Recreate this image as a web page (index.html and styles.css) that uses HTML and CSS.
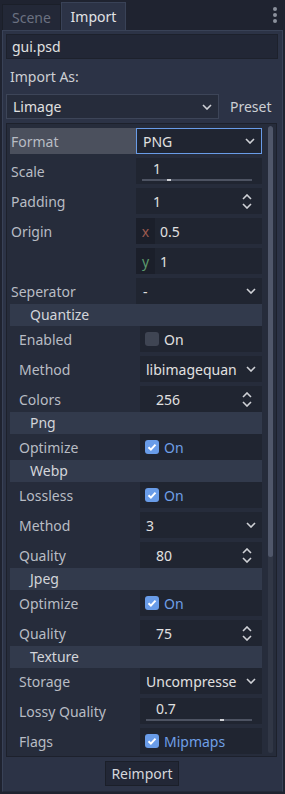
FILE: index.html
```html
<!DOCTYPE html>
<html>
<head>
<meta charset="utf-8">
<link rel="stylesheet" href="styles.css">
</head>
<body>
<div class="tabs">
  <div class="tab tab-off">Scene</div>
  <div class="tab tab-on">Import</div>
  <div class="menu"><span></span><span></span><span></span></div>
</div>
<div class="panel">
  <div class="file">gui.psd</div>
  <div class="label-line">Import As:</div>
  <div class="import-row">
    <div class="opt-big">Limage<svg class="chev" width="10" height="6" viewBox="0 0 10 6"><path d="M1 1l4 4 4-4" fill="none" stroke="#cfd1d6" stroke-width="1.6"/></svg></div>
    <div class="preset">Preset</div>
  </div>
  <div class="inspector">
    <div class="props">
      <div class="row top"><div class="lbl hl">Format</div><div class="ed opt focus">PNG<svg class="chev" width="10" height="6" viewBox="0 0 10 6"><path d="M1 1l4 4 4-4" fill="none" stroke="#cfd1d6" stroke-width="1.6"/></svg></div></div>
      <div class="row top"><div class="lbl">Scale</div><div class="ed range"><span class="rv">1</span><div class="track"><i style="left:25px"></i></div></div></div>
      <div class="row top"><div class="lbl">Padding</div><div class="ed spin">1<svg class="arr" width="10" height="15" viewBox="0 0 10 15"><path d="M1 5l4-4 4 4M1 10l4 4 4-4" fill="none" stroke="#cfd1d6" stroke-width="1.6"/></svg></div></div>
      <div class="row top"><div class="lbl">Origin</div><div class="ed vec"><span class="axis ax-x">x</span><span class="vv">0.5</span></div></div>
      <div class="row top"><div class="lbl"></div><div class="ed vec"><span class="axis ax-y">y</span><span class="vv">1</span></div></div>
      <div class="row top"><div class="lbl">Seperator</div><div class="ed opt">-<svg class="chev" width="10" height="6" viewBox="0 0 10 6"><path d="M1 1l4 4 4-4" fill="none" stroke="#cfd1d6" stroke-width="1.6"/></svg></div></div>
      <div class="sec">Quantize</div>
      <div class="row sub"><div class="lbl">Enabled</div><div class="ed chk"><span class="box"></span>On</div></div>
      <div class="row sub"><div class="lbl">Method</div><div class="ed opt"><span>libimagequan</span><svg class="chev" width="10" height="6" viewBox="0 0 10 6"><path d="M1 1l4 4 4-4" fill="none" stroke="#cfd1d6" stroke-width="1.6"/></svg></div></div>
      <div class="row sub"><div class="lbl">Colors</div><div class="ed spin">256<svg class="arr" width="10" height="15" viewBox="0 0 10 15"><path d="M1 5l4-4 4 4M1 10l4 4 4-4" fill="none" stroke="#cfd1d6" stroke-width="1.6"/></svg></div></div>
      <div class="sec">Png</div>
      <div class="row sub"><div class="lbl">Optimize</div><div class="ed chk on"><span class="box"><svg width="14" height="14" viewBox="0 0 14 14"><path d="M3.5 7.2l2.4 2.4 4.6-5" fill="none" stroke="#fff" stroke-width="2"/></svg></span>On</div></div>
      <div class="sec">Webp</div>
      <div class="row sub"><div class="lbl">Lossless</div><div class="ed chk on"><span class="box"><svg width="14" height="14" viewBox="0 0 14 14"><path d="M3.5 7.2l2.4 2.4 4.6-5" fill="none" stroke="#fff" stroke-width="2"/></svg></span>On</div></div>
      <div class="row sub"><div class="lbl">Method</div><div class="ed opt">3<svg class="chev" width="10" height="6" viewBox="0 0 10 6"><path d="M1 1l4 4 4-4" fill="none" stroke="#cfd1d6" stroke-width="1.6"/></svg></div></div>
      <div class="row sub"><div class="lbl">Quality</div><div class="ed spin">80<svg class="arr" width="10" height="15" viewBox="0 0 10 15"><path d="M1 5l4-4 4 4M1 10l4 4 4-4" fill="none" stroke="#cfd1d6" stroke-width="1.6"/></svg></div></div>
      <div class="sec">Jpeg</div>
      <div class="row sub"><div class="lbl">Optimize</div><div class="ed chk on"><span class="box"><svg width="14" height="14" viewBox="0 0 14 14"><path d="M3.5 7.2l2.4 2.4 4.6-5" fill="none" stroke="#fff" stroke-width="2"/></svg></span>On</div></div>
      <div class="row sub"><div class="lbl">Quality</div><div class="ed spin">75<svg class="arr" width="10" height="15" viewBox="0 0 10 15"><path d="M1 5l4-4 4 4M1 10l4 4 4-4" fill="none" stroke="#cfd1d6" stroke-width="1.6"/></svg></div></div>
      <div class="sec">Texture</div>
      <div class="row sub"><div class="lbl">Storage</div><div class="ed opt"><span>Uncompresse</span><svg class="chev" width="10" height="6" viewBox="0 0 10 6"><path d="M1 1l4 4 4-4" fill="none" stroke="#cfd1d6" stroke-width="1.6"/></svg></div></div>
      <div class="row sub"><div class="lbl">Lossy Quality</div><div class="ed range"><span class="rv">0.7</span><div class="track"><i style="left:74px"></i></div></div></div>
      <div class="row sub"><div class="lbl">Flags</div><div class="ed chk on"><span class="box"><svg width="14" height="14" viewBox="0 0 14 14"><path d="M3.5 7.2l2.4 2.4 4.6-5" fill="none" stroke="#fff" stroke-width="2"/></svg></span>Mipmaps</div></div>
    </div>
    <div class="scroll"><div class="sbar"><div class="grab"></div></div></div>
  </div>
  <div class="btn-line"><div class="btn">Reimport</div></div>
</div>
</body>
</html>
```
FILE: styles.css
```css
* { box-sizing: border-box; }
html, body { margin: 0; padding: 0; }
body {
  background: #1f2330;
  font-family: "Noto Sans", "DejaVu Sans", sans-serif;
  font-size: 14px;
  color: #e0e0e0;
  width: 285px;
  height: 794px;
  overflow: hidden;
}
.tabs {
  height: 30px;
  display: flex;
  align-items: flex-end;
  padding-left: 2px;
}
.tab {
  display: flex;
  align-items: center;
  justify-content: center;
}
.tab-off {
  width: 59px;
  height: 26px;
  background: #232837;
  color: #6b7181;
  border: 1px solid #1b1f29;
  border-bottom: none;
}
.tab-on {
  width: 65px;
  height: 28px;
  background: #2c3346;
  border: 1px solid #394257;
  border-bottom: none;
  color: #e2e3e6;
}
.menu {
  margin-left: auto;
  align-self: flex-start;
  padding: 7px 8px 0 0;
  display: flex;
  flex-direction: column;
  gap: 2px;
}
.menu span {
  width: 4px;
  height: 4px;
  border-radius: 2px;
  background: #8c919c;
}
.panel {
  margin: 0 2px;
  height: 762px;
  background: #2c3346;
  border: 1px solid #394257;
  border-bottom-color: #242a39;
  padding: 3px 4px 0 3px;
}
.file {
  height: 25px;
  background: #222736;
  border: 1px solid #1d212c;
  padding-left: 5px;
  line-height: 23px;
}
.label-line {
  margin-top: 5px;
  height: 26px;
  line-height: 26px;
  padding-left: 4px;
  color: #cdcfd4;
}
.import-row {
  margin-top: 4px;
  display: flex;
  align-items: center;
}
.opt-big {
  width: 213px;
  height: 25px;
  background: #262c3b;
  border: 1px solid #3d4558;
  display: flex;
  align-items: center;
  padding: 0 6px;
  justify-content: space-between;
}
.preset {
  margin-left: 11px;
  color: #cdcfd4;
}
.inspector {
  margin-top: 4px;
  width: 271px;
  height: 634px;
  background: #262c3b;
  border: 1px solid #1d212c;
  display: flex;
}
.props {
  width: 255px;
  padding: 4px 0 0 3px;
  display: flex;
  flex-direction: column;
}
.row {
  height: 26px;
  display: grid;
  flex: none;
}
.row + .row { margin-top: 4px; }
.row.top { grid-template-columns: 126px 126px; }
.row.sub { grid-template-columns: 130px 122px; }
.lbl {
  display: flex;
  align-items: center;
  color: #b8bcc4;
  white-space: nowrap;
}
.top .lbl { padding-left: 1px; }
.sub .lbl { padding-left: 9px; }
.lbl.hl { background: #4b505d; }
.ed {
  background: #202531;
  display: flex;
  align-items: center;
  position: relative;
  overflow: hidden;
  white-space: nowrap;
}
.ed.opt { justify-content: space-between; padding: 0 6px 0 7px; }
.sub .ed.opt { padding-left: 6px; }
.ed.focus { border: 1px solid #699ce8; padding-left: 6px; }
.chev { flex: none; }
.ed.spin { justify-content: space-between; padding: 0 10px 0 17px; }
.sub .ed.spin { padding-left: 16px; }
.ed.range { flex-direction: column; align-items: stretch; padding: 1px 10px 0 6px; }
.rv { padding-left: 11px; height: 19px; line-height: 19px; }
.sub .rv { padding-left: 10px; }
.track {
  position: relative;
  height: 2px;
  background: #4d5362;
  margin-top: 1px;
}
.track i {
  position: absolute;
  top: 0;
  width: 4px;
  height: 2px;
  background: #cfd1d6;
}
.ed.vec { background: #202531; }
.axis {
  width: 19px;
  height: 100%;
  background: #1b1f2a;
  display: flex;
  align-items: center;
  justify-content: center;
}
.ax-x { color: #9c5a4f; }
.ax-y { color: #5c9a6c; }
.vv { padding-left: 5px; }
.ed.chk { padding-left: 5px; gap: 5px; }
.box {
  width: 14px;
  height: 14px;
  border-radius: 3px;
  background: #3f4553;
  display: flex;
}
.chk.on { color: #6f9fe6; }
.chk.on .box { background: #699ce8; }
.sec {
  height: 22px;
  flex: none;
  width: 252px;
  background: #323a4c;
  padding-left: 20px;
  line-height: 22px;
  color: #d3d5da;
}
.scroll {
  width: 14px;
  padding: 2px 0 3px 6px;
  display: flex;
}
.sbar {
  width: 5px;
  height: 100%;
  background: #313746;
  border-radius: 3px;
  overflow: hidden;
}
.grab {
  height: 431px;
  background: #50576a;
  border-radius: 3px;
}
.btn-line {
  margin-top: 4px;
  display: flex;
  justify-content: center;
}
.btn {
  width: 74px;
  height: 25px;
  background: #222736;
  border: 1px solid #1b1f29;
  display: flex;
  align-items: center;
  justify-content: center;
  color: #d5d7dc;
}
```
